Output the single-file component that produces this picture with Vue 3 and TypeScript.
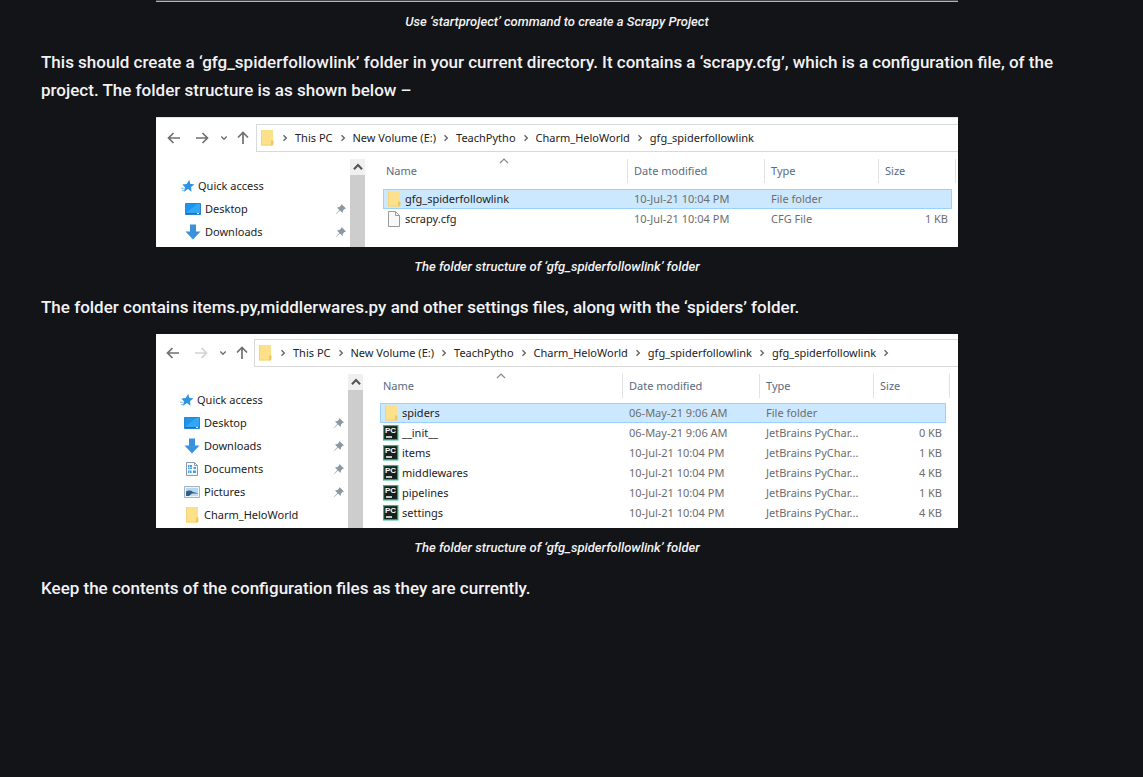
<script setup lang="ts">
type Icon = 'star' | 'desktop' | 'download' | 'document' | 'picture' | 'folder' | 'file' | 'pycharm'

interface Place { label: string; icon: Icon; pinned?: boolean; root?: boolean }
interface Entry { name: string; icon: Icon; modified: string; type: string; size: string }
interface Explorer {
  id: string
  path: string[]
  trailing: boolean
  canForward: boolean
  places: Place[]
  entries: Entry[]
}
interface Section { text: string; explorer?: Explorer }

const caption = 'The folder structure of ‘gfg_spiderfollowlink’ folder'
const code = 'JetBrains PyChar...'

const sections: Section[] = [
  {
    text: 'This should create a ‘gfg_spiderfollowlink’ folder in your current directory. It contains a ‘scrapy.cfg’, which is a configuration file, of the project. The folder structure is as shown below –',
    explorer: {
      id: 'outer',
      path: ['This PC', 'New Volume (E:)', 'TeachPytho', 'Charm_HeloWorld', 'gfg_spiderfollowlink'],
      trailing: false,
      canForward: true,
      places: [
        { label: 'Quick access', icon: 'star', root: true },
        { label: 'Desktop', icon: 'desktop', pinned: true },
        { label: 'Downloads', icon: 'download', pinned: true },
      ],
      entries: [
        { name: 'gfg_spiderfollowlink', icon: 'folder', modified: '10-Jul-21 10:04 PM', type: 'File folder', size: '' },
        { name: 'scrapy.cfg', icon: 'file', modified: '10-Jul-21 10:04 PM', type: 'CFG File', size: '1 KB' },
      ],
    },
  },
  {
    text: 'The folder contains items.py,middlerwares.py and other settings files, along with the ‘spiders’ folder.',
    explorer: {
      id: 'inner',
      path: ['This PC', 'New Volume (E:)', 'TeachPytho', 'Charm_HeloWorld', 'gfg_spiderfollowlink', 'gfg_spiderfollowlink'],
      trailing: true,
      canForward: false,
      places: [
        { label: 'Quick access', icon: 'star', root: true },
        { label: 'Desktop', icon: 'desktop', pinned: true },
        { label: 'Downloads', icon: 'download', pinned: true },
        { label: 'Documents', icon: 'document', pinned: true },
        { label: 'Pictures', icon: 'picture', pinned: true },
        { label: 'Charm_HeloWorld', icon: 'folder' },
      ],
      entries: [
        { name: 'spiders', icon: 'folder', modified: '06-May-21 9:06 AM', type: 'File folder', size: '' },
        { name: '__init__', icon: 'pycharm', modified: '06-May-21 9:06 AM', type: code, size: '0 KB' },
        { name: 'items', icon: 'pycharm', modified: '10-Jul-21 10:04 PM', type: code, size: '1 KB' },
        { name: 'middlewares', icon: 'pycharm', modified: '10-Jul-21 10:04 PM', type: code, size: '4 KB' },
        { name: 'pipelines', icon: 'pycharm', modified: '10-Jul-21 10:04 PM', type: code, size: '1 KB' },
        { name: 'settings', icon: 'pycharm', modified: '10-Jul-21 10:04 PM', type: code, size: '4 KB' },
      ],
    },
  },
  { text: 'Keep the contents of the configuration files as they are currently.' },
]
</script>

<template>
  <svg class="sprite" aria-hidden="true">
    <symbol id="star" viewBox="0 0 16 16">
      <path d="M9.500.8 10.500 5.500 15.500 6.200 11.500 9 12 14.500 8 11.500 3 14.800 4.800 9.600 1.500 6.200 6.500 5.700Z" fill="#2f93e0" />
      <path d="M0 10.500h4M1 13h3" stroke="#6db6ee" />
    </symbol>
    <symbol id="desktop" viewBox="0 0 16 16">
      <path d="M.5 2.500h15v11h-15z" fill="#1c96ec" stroke="#2b86cf" />
      <path d="M1 12 12 3h3v9z" fill="#34a6f6" />
      <path d="M1 12.500h14" stroke="#1b72b8" />
      <path d="M12 12.500h2" stroke="#d9f0ff" />
    </symbol>
    <symbol id="download" viewBox="0 0 16 16">
      <path d="M5 .5h6v7h4.500L8 15.500.5 7.500H5z" fill="#3a91dd" />
    </symbol>
    <symbol id="document" viewBox="0 0 16 16">
      <path d="M2.500 1.500h8l3 3v10h-11z" fill="#f6fafd" stroke="#8b9aa6" />
      <path d="M10.500 1.500v3h3" fill="none" stroke="#8b9aa6" />
      <path d="M4 4h4v4H4zM9.500 6H12v2H9.500zM4 9.500h3.500V12H4zM9 9.500h3V12H9z" fill="#4a9bd8" />
      <path d="M4 6.500h4M5.500 4v8" stroke="#c4e0f4" stroke-width=".7" />
    </symbol>
    <symbol id="picture" viewBox="0 0 16 16">
      <path d="M.5 2.500h15v11h-15z" fill="#eef5fa" stroke="#a6b3bd" />
      <path d="M2 4h12v4H2z" fill="#b4d8f3" />
      <path d="M2 7.500q4-2 7 .5l5 1v3H2z" fill="#335f85" />
      <path d="M8 9.500h6V12H5z" fill="#c6dbe9" />
    </symbol>
    <symbol id="folder" viewBox="0 0 16 16">
      <path d="M2 0h12v15.500H2z" fill="#fde08a" />
      <path d="M2 0h1v15.500H2zM2 14.500h10v1H2z" fill="#f5d475" />
      <path d="M12 10.500h2.500v4L12 16z" fill="#edc95f" />
    </symbol>
    <symbol id="file" viewBox="0 0 16 16">
      <path d="M2.500.5h7l4 4v11h-11z" fill="#f8f8f8" stroke="#999" />
      <path d="M9.500.5v4h4" fill="none" stroke="#999" />
    </symbol>
    <symbol id="pin" viewBox="0 0 12 12">
      <path d="M6.500 1 11 5.500 9.500 6 8 7.500 7.500 10 5 7.600 1 11.200.800 11 4.400 7 2 4.500 4.500 4 6 2.500Z" fill="#8b98a3" />
    </symbol>
    <symbol id="arrow" viewBox="0 0 14 14">
      <path d="M13 7H2M6.500 2 1.500 7l5 5" fill="none" stroke="currentColor" stroke-width="1.700" />
    </symbol>
    <symbol id="chevron" viewBox="0 0 8 8">
      <path d="M2.500 1.300 5.300 4 2.500 6.700" fill="none" stroke="currentColor" stroke-width="1.400" />
    </symbol>
    <symbol id="sort" viewBox="0 0 12 12">
      <path d="M2 8 6 4l4 4" fill="none" stroke="currentColor" stroke-width="1.200" />
    </symbol>
  </svg>

  <main class="article">
    <figure class="figure">
      <div class="clip"></div>
      <figcaption>Use ‘startproject’ command to create a Scrapy Project</figcaption>
    </figure>

    <template v-for="section in sections" :key="section.text">
      <p>{{ section.text }}</p>
      <figure v-if="section.explorer" class="figure">
        <div class="explorer" :class="section.explorer.id">
          <div class="toolbar">
            <div class="history">
              <button type="button" aria-label="Back"><svg class="i14"><use href="#arrow" /></svg></button>
              <button type="button" aria-label="Forward" :disabled="!section.explorer.canForward"><svg class="i14 flip"><use href="#arrow" /></svg></button>
              <button type="button" class="recent" aria-label="Recent locations"><svg class="i8 down"><use href="#chevron" /></svg></button>
              <button type="button" aria-label="Up"><svg class="i14 up"><use href="#arrow" /></svg></button>
            </div>
            <nav class="path" aria-label="Path">
              <svg class="i16"><use href="#folder" /></svg>
              <template v-for="(step, i) in section.explorer.path" :key="i">
                <svg class="i8"><use href="#chevron" /></svg>
                <a href="#">{{ step }}</a>
              </template>
              <svg v-if="section.explorer.trailing" class="i8"><use href="#chevron" /></svg>
            </nav>
          </div>
          <div class="panes">
            <ul class="places">
              <li v-for="place in section.explorer.places" :key="place.label" :class="{ root: place.root }">
                <a href="#"><svg :class="place.root ? 'i14' : 'i16'"><use :href="'#' + place.icon" /></svg>{{ place.label }}</a>
                <svg v-if="place.pinned" class="i12"><use href="#pin" /></svg>
              </li>
            </ul>
            <div class="scroll">
              <button type="button" aria-label="Scroll up"><svg class="i12 rise"><use href="#chevron" /></svg></button>
            </div>
            <div class="listing">
              <table>
                <colgroup><col class="c-name" /><col class="c-date" /><col class="c-type" /><col /></colgroup>
                <thead>
                  <tr>
                    <th scope="col">Name<svg class="i12 sort"><use href="#sort" /></svg></th>
                    <th scope="col">Date modified</th>
                    <th scope="col">Type</th>
                    <th scope="col" class="last">Size</th>
                  </tr>
                </thead>
                <tbody>
                  <tr v-for="(entry, i) in section.explorer.entries" :key="entry.name" :class="{ selected: i === 0 }">
                    <td>
                      <span class="name">
                        <svg v-if="entry.icon === 'pycharm'" class="i16" viewBox="0 0 16 16">
                          <path d="M0 0h15.500v15.500H0z" fill="#2bbd86" />
                          <path d="M1.200 1.200h13v13h-13z" fill="#16201f" />
                          <text x="2" y="8" class="badge">PC</text>
                          <path d="M3 12h6" stroke="#fff" stroke-width="1.500" />
                        </svg>
                        <svg v-else class="i16"><use :href="'#' + entry.icon" /></svg>{{ entry.name }}
                      </span>
                    </td>
                    <td>{{ entry.modified }}</td>
                    <td>{{ entry.type }}</td>
                    <td class="size">{{ entry.size }}</td>
                  </tr>
                </tbody>
              </table>
            </div>
          </div>
        </div>
        <figcaption>{{ caption }}</figcaption>
      </figure>
    </template>
  </main>
</template>

<style>
body {
  background: #131418;
}
</style>

<style scoped>
.sprite {
  position: absolute;
  width: 0;
  height: 0;
}
.article {
  padding: 0 70px 48px 41px;
  color: #f2f2f4;
  font-family: Roboto, sans-serif;
}
p {
  margin: 0;
  font-size: 17px;
  font-weight: 500;
  line-height: 28px;
}
.figure {
  max-width: 802px;
  margin: 0 auto 16px;
}
p + .figure {
  margin-top: 13px;
}
figcaption {
  margin-top: 10px;
  font-size: 13px;
  font-style: italic;
  font-weight: 500;
  line-height: 20px;
  text-align: center;
}
.clip {
  height: 1px;
  background: #44454b;
  border-bottom: 1px solid #b4b5b9;
}
svg {
  flex: none;
  display: block;
}
.i8 { width: 8px; height: 8px; }
.i12 { width: 12px; height: 12px; }
.i14 { width: 14px; height: 14px; }
.i16 { width: 16px; height: 16px; }
.flip { transform: scaleX(-1); }
.up, .down { transform: rotate(90deg); }
.rise { transform: rotate(-90deg); }
.badge {
  fill: #fff;
  font: 700 8px "Liberation Sans", sans-serif;
}
button {
  display: flex;
  padding: 0;
  border: 0;
  background: none;
  color: #707070;
}
button:disabled { color: #d4d4d4; }
a {
  color: inherit;
  text-decoration: none;
}
.explorer {
  --lead: 100px;
  --back: 11px;
  --side: 194px;
  --indent: 25px;
  --places-top: 15px;
  --foot: 4px;
  --table-gap: 18px;
  --table-end: 6px;
  --name: 245px;
  --top: 6px;
  --head: 24px;
  border-top: 1px solid #e4e4e4;
  background: #fff;
  color: #1c1c1c;
  font-family: "Noto Sans", "Open Sans", sans-serif;
  font-size: 11px;
  line-height: 16px;
}
.inner {
  --lead: 98px;
  --back: 10px;
  --side: 192px;
  --indent: 24px;
  --places-top: 14px;
  --foot: 2px;
  --table-gap: 17px;
  --table-end: 12px;
  --name: 243px;
  --top: 4px;
  --head: 23px;
  border-top-color: #fff;
}
.toolbar {
  display: flex;
  padding-top: var(--top);
}
.history {
  display: flex;
  align-items: center;
  flex: none;
  box-sizing: border-box;
  width: var(--lead);
  padding-left: var(--back);
  gap: 14px;
}
.recent { margin: 0 -6px 0 -3px; }
.path {
  display: flex;
  align-items: center;
  flex: 1;
  height: 26px;
  padding-left: 2px;
  gap: 6px;
  border: 1px solid #d9d9d9;
  border-right: 0;
  color: #222;
  white-space: nowrap;
}
.path .i8 { color: #666; }
.panes {
  display: flex;
  padding-top: 7px;
}
.places {
  flex: none;
  box-sizing: border-box;
  width: var(--side);
  margin: 0;
  padding: var(--places-top) 3px var(--foot) var(--indent);
  list-style: none;
}
.places li {
  display: flex;
  align-items: center;
  justify-content: space-between;
  height: 23px;
  padding-left: 4px;
}
.places li.root { padding-left: 0; }
.places a {
  display: flex;
  align-items: center;
  gap: 4px;
}
.root a { gap: 3px; }
.scroll {
  flex: none;
  width: 15px;
  background: #cdcdcd;
}
.scroll button {
  align-items: center;
  justify-content: center;
  width: 15px;
  height: 16px;
  background: #f0f0f0;
  color: #555;
}
.listing {
  flex: 1;
  padding-left: var(--table-gap);
  padding-right: var(--table-end);
}
table {
  width: 100%;
  table-layout: fixed;
  border-collapse: separate;
  border-spacing: 0;
}
.c-name { width: var(--name); }
.c-date { width: 137px; }
.c-type { width: 114px; }
th {
  position: relative;
  height: var(--head);
  padding: 0 0 6px 6px;
  color: #5b6a80;
  font-weight: 400;
  text-align: left;
}
th:first-child { padding-left: 3px; }
th::after {
  content: "";
  position: absolute;
  top: 0;
  right: 0;
  width: 1px;
  height: 24px;
  background: #e2e2e2;
}
th.last::after { right: -4px; }
.sort {
  position: absolute;
  top: -4px;
  left: 115px;
  color: #888;
}
td {
  box-sizing: border-box;
  height: 20px;
  padding: 0 0 0 6px;
  color: #6d6d6d;
  white-space: nowrap;
}
td:first-child {
  padding-left: 3px;
  color: #1c1c1c;
}
.name {
  display: flex;
  align-items: center;
  gap: 3px;
}
td.size {
  padding-right: 4px;
  text-align: right;
}
.selected td {
  background: #cce8ff;
  border: 1px solid #99d1ff;
  border-width: 1px 0;
}
.selected td:first-child { box-shadow: inset 1px 0 #99d1ff; }
.selected td:last-child { box-shadow: inset -1px 0 #99d1ff; }
</style>
